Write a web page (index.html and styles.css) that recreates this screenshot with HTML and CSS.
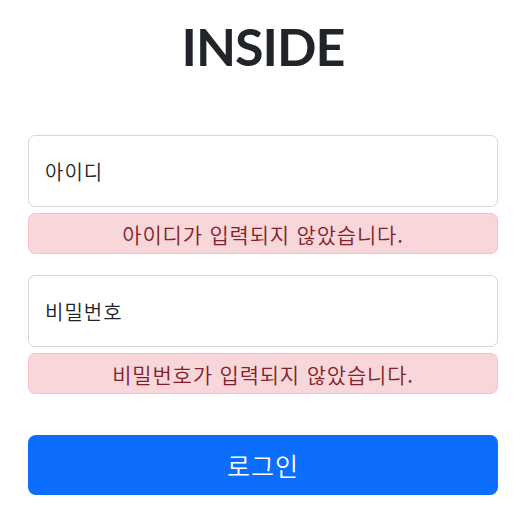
FILE: index.html
```html
<!DOCTYPE html>
<html lang="ko">
<head>
    <meta charset="UTF-8">
    <title>INSIDE 로그인</title>
    <link rel="stylesheet" href="styles.css">
</head>
<body>
    <div class="login-wrap">
        <!-- 타이틀 -->
        <h1 class="login-title">INSIDE</h1>

        <form class="login-form">
            <div class="field">
                <input type="text" class="form-input" placeholder="아이디">
                <div class="alert-error">아이디가 입력되지 않았습니다.</div>
            </div>

            <div class="field">
                <input type="password" class="form-input" placeholder="비밀번호">
                <div class="alert-error">비밀번호가 입력되지 않았습니다.</div>
            </div>

            <button type="button" class="btn-login">로그인</button>
        </form>
    </div>
</body>
</html>
```

FILE: styles.css
```css
* {
    margin: 0;
    padding: 0;
    box-sizing: border-box;
}

body {
    font-family: "Noto Sans", "Noto Sans CJK KR", sans-serif;
    color: #212529;
    background: #fff;
}

/* 전체 컨테이너 */
.login-wrap {
    padding: 14px 26px 0 28px;
}

.login-title {
    text-align: center;
    font-family: "Lato", "Noto Sans", sans-serif;
    font-size: 52px;
    font-weight: 700;
    letter-spacing: -1px;
    line-height: 65px;
    color: #212529;
    margin-bottom: 56px;
}

/* 입력 영역 */
.field {
    margin-bottom: 21px;
}

.form-input {
    display: block;
    width: 100%;
    height: 72px;
    padding: 0 16px;
    border: 1px solid #d3d6da;
    border-radius: 7px;
    font-family: "Noto Sans CJK KR", sans-serif;
    font-size: 20px;
    font-weight: 350;
    letter-spacing: 1px;
    color: #212529;
    outline: none;
}
.form-input::placeholder {
    color: #212529;
}

/* 에러 메시지 */
.alert-error {
    margin-top: 6px;
    height: 41px;
    display: flex;
    align-items: center;
    justify-content: center;
    background: #f8d7da;
    border: 1px solid #f5c2c7;
    border-radius: 7px;
    color: #842029;
    font-family: "Noto Sans CJK KR", sans-serif;
    font-size: 21px;
    font-weight: 350;
    letter-spacing: 0.8px;
}

/* 로그인 버튼 */
.btn-login {
    display: block;
    width: 100%;
    height: 60px;
    margin-top: 41px;
    border: none;
    border-radius: 8px;
    background: #0d6efd;
    color: #fff;
    font-family: "Noto Sans CJK KR", sans-serif;
    font-size: 25px;
    font-weight: 350;
    letter-spacing: 1px;
}
```
